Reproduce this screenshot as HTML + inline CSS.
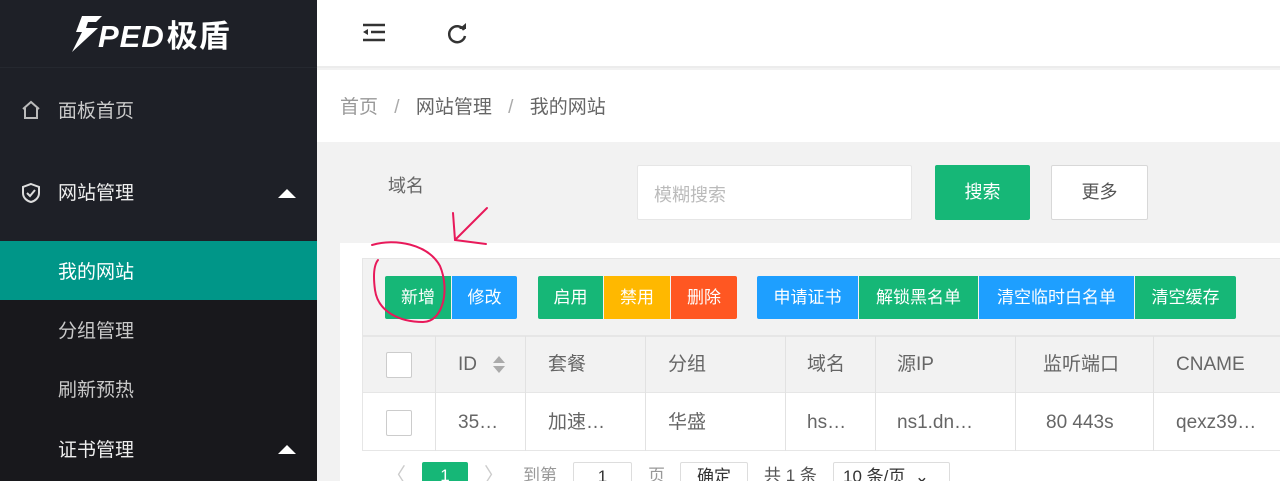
<!DOCTYPE html>
<html style="overflow:hidden"><head><meta charset="utf-8"><style>
*{margin:0;padding:0;box-sizing:border-box}
html,body{width:1280px;height:481px;overflow:hidden}
body{position:relative;background:#f2f2f2;font-family:"Liberation Sans","Noto Sans CJK SC",sans-serif;font-size:18px}
.a{position:absolute}
.side{left:0;top:0;width:317px;height:481px;background:#1e2027}
.sub{left:0;top:241px;width:317px;height:240px;background:#18181c}
.mi{color:#c9c9c9;font-size:19px;line-height:24px}
.tri{width:0;height:0;border-left:9px solid transparent;border-right:9px solid transparent;border-bottom:9px solid #fff}
.btn{position:absolute;top:276px;height:43px;line-height:43px;color:#fff;text-align:center;font-size:17px}
.th,.td{position:absolute;color:#666;font-size:19px;line-height:24px;height:24px}
.th{top:353px}.td{top:411px}
.vl{position:absolute;width:1px;background:#e2e2e2}
.cb{position:absolute;left:386px;width:26px;height:26px;border:1px solid #ccc;background:#fff;border-radius:2px}
.pg{position:absolute;top:462px;height:30px;line-height:28px;font-size:17px}
</style></head><body>
<div class="a side"></div>
<div class="a sub"></div>
<div class="a" style="left:0;top:67px;width:317px;height:1px;background:#25282f"></div>
<svg class="a" style="left:68px;top:14px" width="40" height="40" viewBox="0 0 40 40"><path d="M14 2 H34 L28 8 H20 L18 14 H30 L4 38 L14 18 H8 Z" fill="#fff"/></svg>
<div class="a" style="left:98px;top:14px;color:#fff;font-size:31px;line-height:40px;font-weight:bold;font-style:italic;letter-spacing:1px">PED<span style="font-style:normal;font-family:'Noto Sans CJK SC',sans-serif;margin-left:2px">极盾</span></div>
<svg class="a" style="left:20px;top:99px" width="22" height="22" viewBox="0 0 22 22"><path d="M3 10 L11 3 L19 10 M5 9 V19 H17 V9" fill="none" stroke="#bbb" stroke-width="2"/></svg>
<div class="a mi" style="left:58px;top:100px">面板首页</div>
<svg class="a" style="left:20px;top:182px" width="22" height="22" viewBox="0 0 22 22"><path d="M11 2 L19 5 V11 C19 16 15 19 11 20 C7 19 3 16 3 11 V5 Z M7 11 L10 14 L15 8" fill="none" stroke="#ddd" stroke-width="2"/></svg>
<div class="a mi" style="left:58px;top:182px;color:#eee">网站管理</div>
<div class="a tri" style="left:278px;top:189px"></div>
<div class="a" style="left:0;top:241px;width:317px;height:59px;background:#009688"></div>
<div class="a mi" style="left:58px;top:261px;color:#fff">我的网站</div>
<div class="a mi" style="left:58px;top:320px">分组管理</div>
<div class="a mi" style="left:58px;top:379px">刷新预热</div>
<div class="a mi" style="left:58px;top:439px;color:#eee">证书管理</div>
<div class="a tri" style="left:278px;top:445px"></div>

<div class="a" style="left:317px;top:0;width:963px;height:68px;background:#fff;border-bottom:2px solid #ececec"></div>
<svg class="a" style="left:362px;top:23px" width="24" height="20" viewBox="0 0 24 20"><path d="M1 2H23M9 9H23M1 17H23" stroke="#333" stroke-width="2.5"/><path d="M1 9L6 6V12Z" fill="#333"/></svg>
<svg class="a" style="left:445px;top:22px" width="24" height="24" viewBox="0 0 24 24"><path d="M19 8 A8 8 0 1 0 20 14" fill="none" stroke="#333" stroke-width="2.5"/><path d="M14 7 H21 V1Z" fill="#333"/></svg>
<div class="a" style="left:317px;top:70px;width:963px;height:72px;background:#fff"></div>
<div class="a" style="left:340px;top:96px;color:#999;font-size:19px;line-height:24px">首页 <span style="margin:0 11px;color:#aaa">/</span> <span style="color:#666">网站管理</span> <span style="margin:0 11px;color:#aaa">/</span> <span style="color:#666">我的网站</span></div>

<div class="a" style="left:388px;top:172px;color:#666;font-size:18px">域名</div>
<div class="a" style="left:637px;top:165px;width:275px;height:55px;background:#fff;border:1px solid #e6e6e6;border-radius:2px;color:#bbb;padding:15px 16px;font-size:18px">模糊搜索</div>
<div class="a" style="left:935px;top:165px;width:95px;height:55px;background:#16b777;border-radius:2px;color:#fff;text-align:center;line-height:55px">搜索</div>
<div class="a" style="left:1051px;top:165px;width:97px;height:55px;background:#fff;border:1px solid #d8d8d8;border-radius:2px;color:#555;text-align:center;line-height:53px">更多</div>

<div class="a" style="left:340px;top:243px;width:940px;height:238px;background:#fff"></div>
<div class="a" style="left:362px;top:258px;width:918px;height:78px;background:#f2f2f2;border:1px solid #e6e6e6;border-right:none"></div>
<div class="btn" style="left:385px;width:66px;background:#16b777;border-radius:2px 0 0 2px">新增</div>
<div class="btn" style="left:452px;width:65px;background:#1e9fff;border-radius:0 2px 2px 0">修改</div>
<div class="btn" style="left:538px;width:65px;background:#16b777;border-radius:2px 0 0 2px">启用</div>
<div class="btn" style="left:604px;width:66px;background:#ffb800">禁用</div>
<div class="btn" style="left:671px;width:66px;background:#ff5722;border-radius:0 2px 2px 0">删除</div>
<div class="btn" style="left:757px;width:101px;background:#1e9fff;border-radius:2px 0 0 2px">申请证书</div>
<div class="btn" style="left:859px;width:119px;background:#16b777">解锁黑名单</div>
<div class="btn" style="left:979px;width:155px;background:#1e9fff">清空临时白名单</div>
<div class="btn" style="left:1135px;width:101px;background:#16b777;border-radius:0 2px 2px 0">清空缓存</div>

<div class="a" style="left:362px;top:336px;width:918px;height:57px;background:#f2f2f2;border:1px solid #e6e6e6;border-right:none"></div>
<div class="a" style="left:362px;top:393px;width:918px;height:58px;background:#fff;border:1px solid #e6e6e6;border-top:none;border-right:none"></div>
<div class="vl" style="left:435px;top:336px;height:115px"></div>
<div class="vl" style="left:525px;top:336px;height:115px"></div>
<div class="vl" style="left:645px;top:336px;height:115px"></div>
<div class="vl" style="left:785px;top:336px;height:115px"></div>
<div class="vl" style="left:875px;top:336px;height:115px"></div>
<div class="vl" style="left:1015px;top:336px;height:115px"></div>
<div class="vl" style="left:1153px;top:336px;height:115px"></div>
<div class="cb" style="top:352px"></div>
<div class="cb" style="top:410px"></div>
<div class="th" style="left:458px">ID</div>
<div class="a" style="left:493px;top:356px;border:6px solid transparent;border-bottom:7px solid #aaa;border-top:none"></div>
<div class="a" style="left:493px;top:366px;border:6px solid transparent;border-top:7px solid #aaa;border-bottom:none"></div>
<div class="th" style="left:548px">套餐</div>
<div class="th" style="left:668px">分组</div>
<div class="th" style="left:807px">域名</div>
<div class="th" style="left:897px">源IP</div>
<div class="th" style="left:1043px">监听端口</div>
<div class="th" style="left:1176px">CNAME</div>
<div class="td" style="left:458px">35…</div>
<div class="td" style="left:548px">加速…</div>
<div class="td" style="left:668px">华盛</div>
<div class="td" style="left:807px">hs…</div>
<div class="td" style="left:897px">ns1.dn…</div>
<div class="td" style="left:1046px">80 443s</div>
<div class="td" style="left:1176px">qexz39…</div>

<div class="pg" style="left:386px;color:#ccc;font-size:20px">〈</div>
<div class="pg" style="left:422px;width:46px;background:#16b777;border-radius:2px;color:#fff;text-align:center">1</div>
<div class="pg" style="left:484px;color:#ccc;font-size:20px">〉</div>
<div class="pg" style="left:523px;color:#999">到第</div>
<div class="pg" style="left:573px;width:59px;border:1px solid #ddd;border-radius:2px;text-align:center;color:#333">1</div>
<div class="pg" style="left:648px;color:#999">页</div>
<div class="pg" style="left:680px;width:68px;border:1px solid #ddd;border-radius:2px;text-align:center;color:#333">确定</div>
<div class="pg" style="left:764px;color:#555">共 1 条</div>
<div class="pg" style="left:833px;width:117px;border:1px solid #ddd;border-radius:2px;padding-left:9px;color:#333">10 条/页 &nbsp;⌄</div>

<svg class="a" style="left:0;top:0" width="1280" height="481" viewBox="0 0 1280 481">
<g fill="none" stroke="#e8195a" stroke-width="2" stroke-linecap="round">
<path d="M372 245 C395 238 428 244 440 266 C450 290 443 322 423 322 C400 322 378 312 375 290 C373 275 374 265 378 260"/>
<path d="M487 208 L455 240 M453 213 L455 240 L486 244"/>
</g></svg>
</body></html>
